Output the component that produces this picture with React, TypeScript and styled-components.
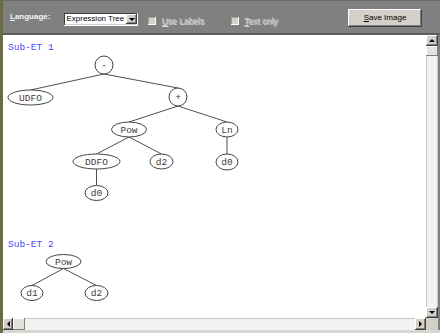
import React from "react";
import styled, { createGlobalStyle } from "styled-components";

const GlobalStyle = createGlobalStyle`
  html, body { margin: 0; padding: 0; background: #fff; overflow: hidden; }
  #root { width: 440px; height: 333px; }
`;

const Frame = styled.div`
  width: 440px;
  height: 333px;
  display: flex;
  background: #808080;
  font-family: "Liberation Sans", Arial, sans-serif;
`;

const Strip = styled.div`
  width: 3px;
  flex: none;
  background: #6f6b40;
`;

const Column = styled.div`
  flex: 1;
  min-width: 0;
  display: flex;
  flex-direction: column;
`;

const Toolbar = styled.div`
  height: 33px;
  flex: none;
  box-sizing: border-box;
  display: flex;
  align-items: center;
  padding: 0 18px 0 7px;
  background: #808080;
  border-top: 1px solid #6c6c6c;
  font-size: 8px;
`;

const FieldLabel = styled.span`
  font-weight: bold;
  color: #f4f4f4;
  line-height: 10px;
  margin-right: 13px;
`;

const Select = styled.div`
  width: 75px;
  height: 14px;
  margin-top: 4px;
  box-sizing: border-box;
  padding: 2px 1px 2px 3px;
  display: flex;
  align-items: center;
  background: #fff;
  box-shadow: inset 1px 1px #808080, inset -1px -1px #ffffff, inset 2px 2px #404040, inset -2px -2px #d4d0c8;
  color: #000;
  line-height: 10px;
`;

const SelectText = styled.span`
  flex: 1;
  white-space: nowrap;
  overflow: hidden;
`;

const ArrowBtn = styled.div<{ $w: number; $h: number }>`
  width: ${(p) => p.$w}px;
  height: ${(p) => p.$h}px;
  flex: none;
  box-sizing: border-box;
  display: flex;
  align-items: center;
  justify-content: center;
  background: #d4d0c8;
  box-shadow: inset -1px -1px #404040, inset 1px 1px #ffffff, inset -2px -2px #808080;
`;

const Tri = styled.div<{ $dir: "up" | "down" | "left" | "right" }>`
  width: 0;
  height: 0;
  ${(p) =>
    p.$dir === "up"
      ? "border-left:3px solid transparent;border-right:3px solid transparent;border-bottom:3px solid #000;"
      : p.$dir === "down"
      ? "border-left:3px solid transparent;border-right:3px solid transparent;border-top:3px solid #000;"
      : p.$dir === "left"
      ? "border-top:3px solid transparent;border-bottom:3px solid transparent;border-right:3px solid #000;"
      : "border-top:3px solid transparent;border-bottom:3px solid transparent;border-left:3px solid #000;"}
`;

const CheckField = styled.label<{ $ml: number }>`
  display: flex;
  align-items: center;
  margin-left: ${(p) => p.$ml}px;
  margin-top: 7px;
  color: #c2c2c2;
  text-shadow: 1px 1px 0 #dadada;
  font-size: 8.5px;
  line-height: 10px;
  white-space: nowrap;
`;

const CheckBox = styled.span`
  width: 9px;
  height: 9px;
  box-sizing: border-box;
  margin-right: 5px;
  background: #d4d0c8;
  box-shadow: inset 1px 1px #808080, inset -1px -1px #ffffff, inset 2px 2px #a0a0a0;
`;

const Button = styled.div`
  margin-left: auto;
  width: 74px;
  height: 18px;
  margin-top: 2px;
  box-sizing: border-box;
  display: flex;
  align-items: center;
  justify-content: center;
  background: #d4d0c8;
  color: #000;
  box-shadow: inset -1px -1px #404040, inset 1px 1px #ffffff, inset -2px -2px #808080;
  line-height: 10px;
`;

const Main = styled.div`
  flex: 1;
  display: flex;
  flex-direction: column;
  border-top: 2px solid #5e5e5e;
  background: #d4d0c8;
`;

const Body = styled.div`
  flex: 1;
  display: flex;
  min-height: 0;
`;

const Pane = styled.div`
  flex: 1;
  min-width: 0;
  display: flex;
  flex-direction: column;
`;

const Viewport = styled.div`
  flex: 1;
  min-height: 0;
  overflow: hidden;
  background: #fff;
  padding-top: 7px;
  box-sizing: border-box;
`;

const Section = styled.div`
  display: flex;
  flex-direction: column;
`;

const SectionTitle = styled.div`
  height: 12px;
  line-height: 12px;
  padding-left: 5px;
  font-family: "Liberation Mono", "Courier New", monospace;
  font-size: 9.5px;
  color: #4a4aff;
`;

const TreeSvg = styled.svg`
  display: block;
  flex: none;
`;

const HScroll = styled.div`
  height: 12px;
  flex: none;
  display: flex;
  background: #f2f2f2;
  box-shadow: inset 0 1px #c8c8c8;
`;

const VScroll = styled.div`
  width: 12px;
  flex: none;
  display: flex;
  flex-direction: column;
`;

const VTrack = styled.div`
  flex: 1;
  display: flex;
  flex-direction: column;
  background: #f2f2f2;
  box-shadow: inset 1px 0 #c8c8c8, inset -1px 0 #c8c8c8;
`;

const HTrack = styled.div`
  flex: 1;
`;

const Thumb = styled.div<{ $w: number; $h: number }>`
  width: ${(p) => p.$w}px;
  height: ${(p) => p.$h}px;
  flex: none;
  box-sizing: border-box;
  background: #e4e2dc;
  box-shadow: inset -1px -1px #808080, inset 1px 1px #ffffff;
`;

const Corner = styled.div`
  height: 12px;
  flex: none;
  background: #d4d0c8;
`;

const RightEdge = styled.div`
  width: 2px;
  flex: none;
  background: #808080;
`;

const BottomEdge = styled.div`
  height: 3px;
  flex: none;
  background: #d8d6d0;
`;

type TNode = { label: string; x: number; y: number; rx: number; ry: number };
type Tree = { title: string; height: number; nodes: TNode[]; edges: [number, number][] };

const trees: Tree[] = [
  {
    title: "Sub-ET 1",
    height: 185,
    nodes: [
      { label: "-", x: 101, y: 11, rx: 9, ry: 9 },
      { label: "UDFO", x: 27.5, y: 43.5, rx: 22.5, ry: 7.5 },
      { label: "+", x: 175, y: 43, rx: 9, ry: 9 },
      { label: "Pow", x: 126, y: 75.5, rx: 17.5, ry: 7.5 },
      { label: "Ln", x: 224, y: 75.5, rx: 11, ry: 7.5 },
      { label: "DDFO", x: 93.5, y: 107.5, rx: 23.5, ry: 7.5 },
      { label: "d2", x: 158.5, y: 107.5, rx: 11.5, ry: 7.5 },
      { label: "d0", x: 224, y: 108, rx: 11, ry: 8 },
      { label: "d0", x: 93.5, y: 139, rx: 11.5, ry: 7.5 },
    ],
    edges: [
      [0, 1],
      [0, 2],
      [2, 3],
      [2, 4],
      [3, 5],
      [3, 6],
      [4, 7],
      [5, 8],
    ],
  },
  {
    title: "Sub-ET 2",
    height: 60,
    nodes: [
      { label: "Pow", x: 60.5, y: 10.5, rx: 17.5, ry: 7 },
      { label: "d1", x: 29, y: 42, rx: 11, ry: 7.5 },
      { label: "d2", x: 93.5, y: 42, rx: 11.5, ry: 7.5 },
    ],
    edges: [
      [0, 1],
      [0, 2],
    ],
  },
];

const TreeView: React.FC<{ tree: Tree }> = ({ tree }) => (
  <Section>
    <SectionTitle>{tree.title}</SectionTitle>
    <TreeSvg width={423} height={tree.height} viewBox={`0 0 423 ${tree.height}`}>
      {tree.edges.map(([a, b], i) => {
        const p = tree.nodes[a];
        const c = tree.nodes[b];
        return (
          <line key={i} x1={p.x} y1={p.y + p.ry} x2={c.x} y2={c.y - c.ry} stroke="#505050" strokeWidth={1} />
        );
      })}
      {tree.nodes.map((n, i) => (
        <g key={i}>
          <ellipse cx={n.x} cy={n.y} rx={n.rx} ry={n.ry} fill="#fff" stroke="#444" strokeWidth={1} />
          <text
            x={n.x}
            y={n.y + 0.5}
            textAnchor="middle"
            dominantBaseline="central"
            fontFamily='"Liberation Mono", "Courier New", monospace'
            fontSize={9.5}
            fill="#3c3c3c"
          >
            {n.label}
          </text>
        </g>
      ))}
    </TreeSvg>
  </Section>
);

export default function App() {
  return (
    <>
      <GlobalStyle />
      <Frame>
        <Strip />
        <Column>
          <Toolbar>
            <FieldLabel>
              <u>L</u>anguage:
            </FieldLabel>
            <Select>
              <SelectText>Expression Tree</SelectText>
              <ArrowBtn $w={11} $h={10}>
                <Tri $dir="down" />
              </ArrowBtn>
            </Select>
            <CheckField $ml={9}>
              <CheckBox />
              <span>
                <u>U</u>se Labels
              </span>
            </CheckField>
            <CheckField $ml={26}>
              <CheckBox />
              <span>
                <u>T</u>ext only
              </span>
            </CheckField>
            <Button>
              <span>
                <u>S</u>ave Image
              </span>
            </Button>
          </Toolbar>
          <Main>
            <Body>
              <Pane>
                <Viewport>
                  {trees.map((t) => (
                    <TreeView key={t.title} tree={t} />
                  ))}
                </Viewport>
                <HScroll>
                  <ArrowBtn $w={10} $h={12}>
                    <Tri $dir="left" />
                  </ArrowBtn>
                  <Thumb $w={12} $h={12} />
                  <HTrack />
                  <ArrowBtn $w={11} $h={12}>
                    <Tri $dir="right" />
                  </ArrowBtn>
                </HScroll>
              </Pane>
              <VScroll>
                <ArrowBtn $w={12} $h={11}>
                  <Tri $dir="up" />
                </ArrowBtn>
                <VTrack>
                  <Thumb $w={12} $h={10} />
                </VTrack>
                <ArrowBtn $w={12} $h={11}>
                  <Tri $dir="down" />
                </ArrowBtn>
                <Corner />
              </VScroll>
              <RightEdge />
            </Body>
            <BottomEdge />
          </Main>
        </Column>
      </Frame>
    </>
  );
}
